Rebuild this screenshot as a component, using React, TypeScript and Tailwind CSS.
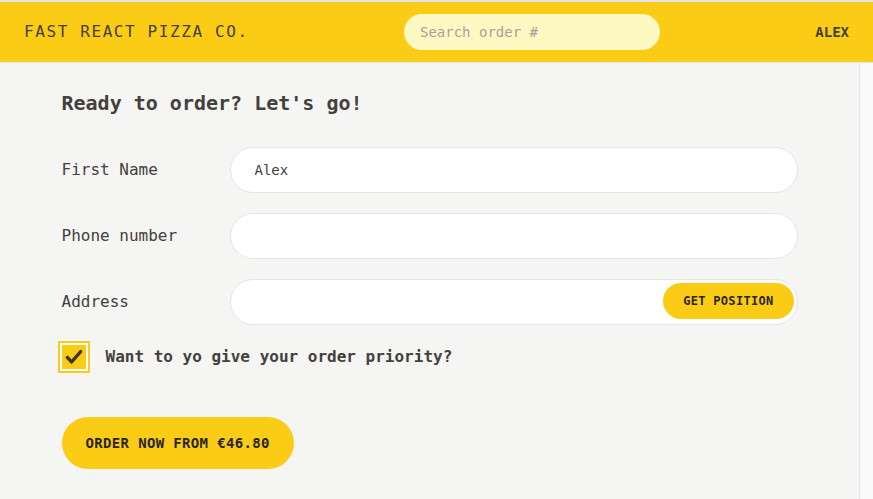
// 注文フォーム画面

const mono = { fontFamily: '"DejaVu Sans Mono", "Liberation Mono", monospace' };

const Header = () => {
  return (
    <header className="flex items-center justify-between border-t-2 border-b border-t-[#e4e2e8] border-b-stone-200 bg-[#facc15] px-6 py-3">
      <a href="#" className="text-base uppercase tracking-widest text-stone-700">
        Fast React Pizza Co.
      </a>
      <input
        placeholder="Search order #"
        className="h-9 w-64 rounded-full bg-[#fef9c3] px-4 text-sm text-stone-700 placeholder:text-stone-400 focus:outline-none"
      />
      <div className="text-sm font-bold uppercase text-stone-700">Alex</div>
    </header>
  );
};

const inputClass =
  "h-[46px] w-full rounded-full border border-stone-200 bg-white px-6 text-sm text-stone-700 focus:outline-none";

const CreateOrder = () => {
  return (
    <div className="mx-auto max-w-3xl px-4 py-6">
      <h2 className="mb-[30px] pt-0.5 text-xl font-bold text-stone-700">Ready to order? Let's go!</h2>

      <form>
        {/* 名前 */}
        <div className="mb-5 flex items-center gap-2">
          <label className="shrink-0 basis-40 text-base text-stone-700">First Name</label>
          <input className={inputClass} defaultValue="Alex" />
        </div>

        {/* 電話番号 */}
        <div className="mb-5 flex items-center gap-2">
          <label className="shrink-0 basis-40 text-base text-stone-700">Phone number</label>
          <input className={inputClass} />
        </div>

        {/* 住所 */}
        <div className="relative mb-5 flex items-center gap-2">
          <label className="shrink-0 basis-40 text-base text-stone-700">Address</label>
          <input className={inputClass} />
          <span className="absolute right-[4px] top-[4px]">
            <button
              type="button"
              className="h-9 rounded-full bg-[#facc15] px-5 text-xs font-bold uppercase tracking-wide text-stone-800"
            >
              Get position
            </button>
          </span>
        </div>

        {/* 優先 */}
        <div className="mb-12 flex items-center gap-5">
          <span className="flex h-6 w-6 items-center justify-center bg-[#facc15] ring-2 ring-[#facc15] ring-offset-2 ring-offset-white">
            <svg width="20" height="20" viewBox="0 0 24 24" fill="none">
              <path d="M4 12.5l5 5.5L20 5.5" stroke="#3a3532" strokeWidth="4" strokeLinecap="round" strokeLinejoin="round" />
            </svg>
          </span>
          <label className="text-base font-bold text-stone-700">Want to yo give your order priority?</label>
        </div>

        <button
          type="button"
          className="h-[52px] rounded-full bg-[#facc15] px-6 text-sm font-bold uppercase tracking-wide text-stone-800"
        >
          Order now from €46.80
        </button>
      </form>
    </div>
  );
};

export default function App() {
  return (
    <div className="flex h-[499px] flex-col overflow-hidden bg-stone-100" style={mono}>
      <Header />
      <div className="flex min-h-0 flex-1">
        <main className="flex-1 overflow-hidden">
          <CreateOrder />
        </main>
        {/* スクロールバー風 */}
        <div className="w-[14px] border-l border-[#e5e5e5] bg-[#fafafa]" />
      </div>
    </div>
  );
}
